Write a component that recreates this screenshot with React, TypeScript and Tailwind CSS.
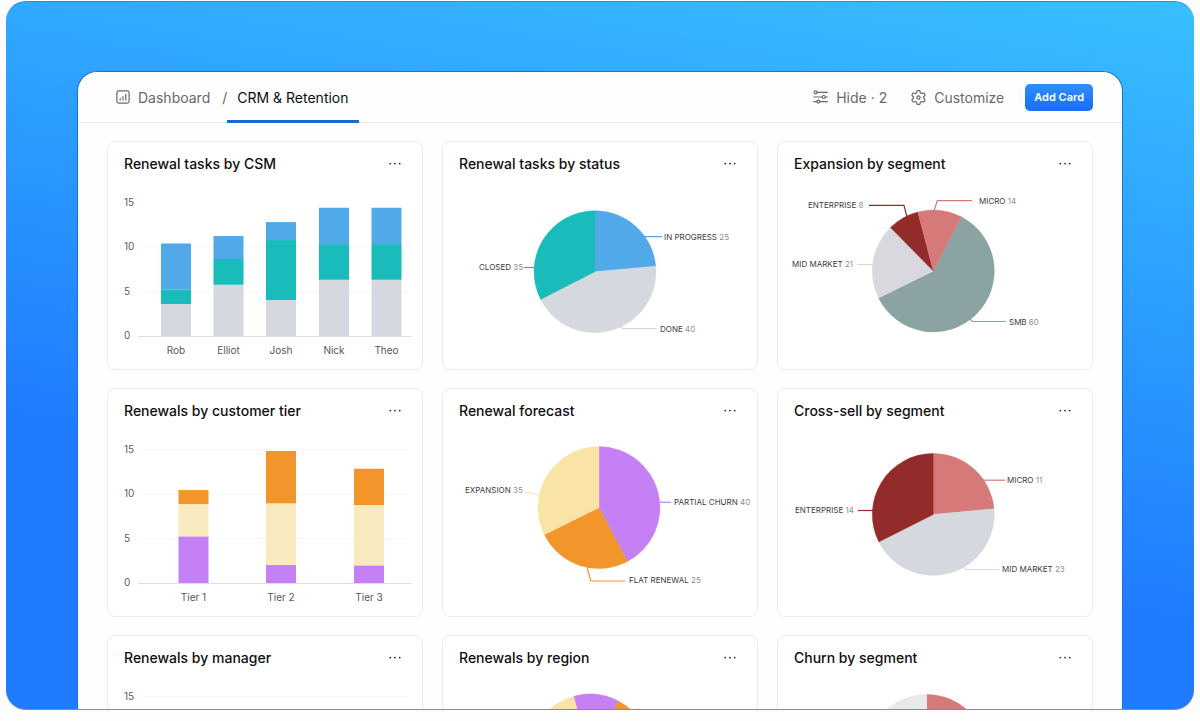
import type { ReactNode } from "react";

const BLUE = "#52a9ea";
const TEAL = "#1abcbb";
const GRAY = "#d6d8df";
const ORANGE = "#f2962b";
const CREAM = "#f9e4a6";
const PALE_CREAM = "#f9eabf";
const PURPLE = "#c680f5";
const DARK_RED = "#932b2a";
const ROSE = "#d67a79";
const SAGE = "#8ba3a3";
const MIST = "#e9e9e9";

type Point = [number, number];
type Slice = { from: number; to: number; color: string };
type Callout = { name: string; value: number; x: number; y: number; color: string; line: Point[] };
type PieData = { cx: number; cy: number; slices: Slice[]; callouts: Callout[] };
type Bar = { label: string; x: number; values: number[] };
type BarData = { colors: string[]; bars: Bar[]; grid: number[]; ticks: number[] };

const RADIUS = 61;
const UNIT = 8.9;
const BASELINE = 195;

/* Charts use the card's own coordinates; the visible part starts below the title row. */
function ChartFrame({ label, children }: { label: string; children: ReactNode }) {
  return (
    <svg viewBox="1 44 314 184" role="img" aria-label={label} className="block w-full">
      {children}
    </svg>
  );
}

function slicePath(cx: number, cy: number, { from, to }: Slice) {
  const at = (deg: number) => {
    const a = (deg * Math.PI) / 180;
    return `${(cx + RADIUS * Math.sin(a)).toFixed(2)} ${(cy - RADIUS * Math.cos(a)).toFixed(2)}`;
  };
  return `M${cx} ${cy}L${at(from)}A${RADIUS} ${RADIUS} 0 ${to - from > 180 ? 1 : 0} 1 ${at(to)}Z`;
}

function PieChart({ title, data }: { title: string; data: PieData }) {
  return (
    <ChartFrame label={title}>
      {data.slices.map((s) => (
        <path key={s.from} d={slicePath(data.cx, data.cy, s)} fill={s.color} stroke={s.color} strokeWidth="0.4" />
      ))}
      {data.callouts.map((c) => (
        <g key={c.name}>
          <polyline
            points={c.line.map((p) => p.join(",")).join(" ")}
            fill="none"
            stroke={c.color}
            strokeWidth="1.2"
            strokeLinejoin="round"
          />
          <text x={c.x} y={c.y} className="fill-[#3c3c3e] text-[8px]">
            {c.name} <tspan className="fill-[#8e8e92]">{c.value}</tspan>
          </text>
        </g>
      ))}
    </ChartFrame>
  );
}

function BarChart({ title, data }: { title: string; data: BarData }) {
  return (
    <ChartFrame label={title}>
      {data.grid.map((v) => (
        <line key={v} x1="37" x2="302" y1={BASELINE - v * UNIT} y2={BASELINE - v * UNIT} stroke="#f6f6f7" />
      ))}
      {data.ticks.map((v) => (
        <text key={v} x="17" y={BASELINE + 3 - v * UNIT} className="fill-[#5c5c60] text-[10px]">
          {v}
        </text>
      ))}
      <line x1="31" x2="304" y1="195.5" y2="195.5" stroke="#dededf" />
      {data.bars.map((b) => {
        let top = BASELINE;
        return (
          <g key={b.label}>
            {b.values.map((v, i) => {
              top -= v * UNIT;
              return <rect key={i} x={b.x} y={top} width="30" height={v * UNIT} fill={data.colors[i]} />;
            })}
            <text x={b.x + 15} y="213" textAnchor="middle" className="fill-[#58585b] text-[10px]">
              {b.label}
            </text>
          </g>
        );
      })}
    </ChartFrame>
  );
}

function Card({ title, children }: { title: string; children: ReactNode }) {
  return (
    <section className="rounded-lg border border-[#ececee] bg-white">
      <header className="flex h-[43px] items-center justify-between pl-4 pr-[19px]">
        <h2 className="text-[14px] font-medium leading-5 text-[#0f0f10]">{title}</h2>
        <button type="button" aria-label={`${title} options`} className="flex h-5 w-4 items-center justify-center">
          <svg viewBox="0 0 14 4" className="h-1 w-3.5 fill-[#2b2b2d]">
            <circle cx="2.3" cy="1.6" r="0.9" />
            <circle cx="7" cy="1.6" r="0.9" />
            <circle cx="11.7" cy="1.6" r="0.9" />
          </svg>
        </button>
      </header>
      {children}
    </section>
  );
}

const csm: BarData = {
  colors: [GRAY, TEAL, BLUE],
  grid: [10, 5],
  ticks: [15, 10, 5, 0],
  bars: [
    { label: "Rob", x: 54, values: [3.6, 1.6, 5.2] },
    { label: "Elliot", x: 106.5, values: [5.76, 2.89, 2.58] },
    { label: "Josh", x: 159, values: [4.04, 6.74, 2.02] },
    { label: "Nick", x: 212, values: [6.32, 4.01, 4.08] },
    { label: "Theo", x: 264.5, values: [6.32, 4.01, 4.08] },
  ],
};

const tiers: BarData = {
  colors: [PURPLE, PALE_CREAM, ORANGE],
  grid: [15, 10, 5],
  ticks: [15, 10, 5, 0],
  bars: [
    { label: "Tier 1", x: 71.5, values: [5.24, 3.63, 1.57] },
    { label: "Tier 2", x: 159, values: [2.02, 6.93, 5.88] },
    { label: "Tier 3", x: 247, values: [1.98, 6.78, 4.08] },
  ],
};

const managers: BarData = { colors: [], grid: [15, 10, 5], ticks: [15], bars: [] };

const status: PieData = {
  cx: 153,
  cy: 130.7,
  slices: [
    { from: 0, to: 84.8, color: BLUE },
    { from: 84.8, to: 243, color: GRAY },
    { from: 243, to: 360, color: TEAL },
  ],
  callouts: [
    { name: "IN PROGRESS", value: 25, x: 222, y: 99, color: BLUE, line: [[202, 95.7], [220, 95.7]] },
    { name: "CLOSED", value: 35, x: 37, y: 129, color: TEAL, line: [[82, 126.5], [93, 126.5]] },
    { name: "DONE", value: 40, x: 218, y: 191, color: GRAY, line: [[178, 186], [181, 187.7], [215, 187.7]] },
  ],
};

const expansion: PieData = {
  cx: 156.3,
  cy: 130,
  slices: [
    { from: 27.3, to: 243.7, color: SAGE },
    { from: 243.7, to: 315.4, color: "#d9d8de" },
    { from: 315.4, to: 345.3, color: DARK_RED },
    { from: 345.3, to: 387.3, color: ROSE },
  ],
  callouts: [
    { name: "ENTERPRISE", value: 8, x: 31, y: 67, color: DARK_RED, line: [[92, 64.3], [127, 64.3], [130, 76]] },
    { name: "MICRO", value: 14, x: 202, y: 63, color: ROSE, line: [[157, 70], [160.3, 59.7], [195, 59.7]] },
    { name: "MID MARKET", value: 21, x: 15, y: 126, color: GRAY, line: [[80, 123.5], [96, 123.5]] },
    { name: "SMB", value: 60, x: 232, y: 184, color: SAGE, line: [[193, 178], [195.5, 180.5], [229, 180.5]] },
  ],
};

const forecast: PieData = {
  cx: 157,
  cy: 119.6,
  slices: [
    { from: 0, to: 152.2, color: PURPLE },
    { from: 152.2, to: 243.6, color: ORANGE },
    { from: 243.6, to: 360, color: CREAM },
  ],
  callouts: [
    { name: "EXPANSION", value: 35, x: 23, y: 105, color: CREAM, line: [[84, 104.6], [90, 105], [98, 107.5]] },
    { name: "PARTIAL CHURN", value: 40, x: 232, y: 117, color: PURPLE, line: [[218, 114.3], [229, 114.3]] },
    { name: "FLAT RENEWAL", value: 25, x: 187, y: 195, color: ORANGE, line: [[145, 179], [148.7, 193], [183, 193]] },
  ],
};

const crossSell: PieData = {
  cx: 156.3,
  cy: 126.4,
  slices: [
    { from: 0, to: 84.8, color: ROSE },
    { from: 84.8, to: 243.2, color: GRAY },
    { from: 243.2, to: 360, color: DARK_RED },
  ],
  callouts: [
    { name: "MICRO", value: 11, x: 230, y: 95, color: ROSE, line: [[206, 92.2], [228, 92.2]] },
    { name: "MID MARKET", value: 23, x: 225, y: 184, color: GRAY, line: [[187, 179], [188.5, 181.5], [223, 181.5]] },
    { name: "ENTERPRISE", value: 14, x: 18, y: 125, color: DARK_RED, line: [[81, 122.5], [96, 122.5]] },
  ],
};

const region: PieData = {
  cx: 148,
  cy: 120,
  slices: [
    { from: 27.7, to: 200, color: ORANGE },
    { from: 200, to: 344.8, color: CREAM },
    { from: 344.8, to: 387.7, color: PURPLE },
  ],
  callouts: [],
};

const churn: PieData = {
  cx: 149.7,
  cy: 120.4,
  slices: [
    { from: 0, to: 180, color: ROSE },
    { from: 180, to: 360, color: MIST },
  ],
  callouts: [],
};

function DashboardIcon() {
  return (
    <svg viewBox="0 0 14 14" className="size-3.5 shrink-0" fill="none" stroke="currentColor" strokeLinecap="round">
      <rect x="0.9" y="0.9" width="12.2" height="12.2" rx="1.8" strokeWidth="1.2" />
      <path d="M4.2 8.7v1.4M7 6.7v3.4M9.8 4.2v5.9" strokeWidth="1.2" />
    </svg>
  );
}

function SlidersIcon() {
  return (
    <svg viewBox="0 0 15 14" className="h-3.5 w-[15px] shrink-0" fill="none" stroke="currentColor" strokeWidth="1.2" strokeLinecap="round">
      <circle cx="2.6" cy="2.4" r="1.5" />
      <path d="M4.2 2.4h10.2" />
      <path d="M.7 7h8.4M12.4 7h2" />
      <circle cx="10.8" cy="7" r="1.5" />
      <path d="M.7 11.6h3M7 11.6h7.4" />
      <circle cx="5.3" cy="11.6" r="1.5" />
    </svg>
  );
}

function GearIcon() {
  return (
    <svg viewBox="1.5 1.5 21 21" className="size-[15px] shrink-0" fill="none" stroke="currentColor" strokeWidth="1.7" strokeLinejoin="round">
      <path d="M9.671 4.136a2.34 2.34 0 0 1 4.659 0 2.34 2.34 0 0 0 3.319 1.915 2.34 2.34 0 0 1 2.33 4.033 2.34 2.34 0 0 0 0 3.831 2.34 2.34 0 0 1-2.33 4.033 2.34 2.34 0 0 0-3.319 1.915 2.34 2.34 0 0 1-4.659 0 2.34 2.34 0 0 0-3.32-1.915 2.34 2.34 0 0 1-2.33-4.033 2.34 2.34 0 0 0 0-3.831A2.34 2.34 0 0 1 6.35 6.051a2.34 2.34 0 0 0 3.319-1.915" />
      <circle cx="12" cy="12" r="2.2" />
    </svg>
  );
}

export default function App() {
  return (
    <div className="flex h-screen flex-col bg-[#fdfdfe] px-1.5 pb-[11px] pt-px font-['Inter',sans-serif]">
      <div className="flex min-h-0 flex-1 flex-col overflow-hidden rounded-[20px] border-b border-t border-b-[#7f86c6] border-t-[#2b8bd6] bg-[linear-gradient(190deg,#38bfff_0%,#1f7cff_68%)] px-[71px] pt-[69px]">
        <main className="min-h-0 flex-1 rounded-t-[20px] border border-b-0 border-[#1f72cc] bg-[#fefefe]">
          <header className="flex h-[51px] items-stretch justify-between border-b border-[#e6e6ea] pl-[38px] pr-[29px] text-[14px] text-[#6b686d]">
            <nav aria-label="Breadcrumb" className="flex items-stretch">
              <a href="#dashboard" className="flex items-center gap-2">
                <DashboardIcon />
                Dashboard
              </a>
              <span className="flex items-center pl-3" aria-hidden="true">
                /
              </span>
              <a
                href="#crm"
                aria-current="page"
                className="-mb-px flex items-center border-b-[3px] border-[#1b66d2] px-2.5 pt-0.5 text-[#0f0f10]"
              >
                CRM &amp; Retention
              </a>
            </nav>
            <div className="flex items-center">
              <button type="button" className="flex items-center gap-2">
                <SlidersIcon />
                Hide · 2
              </button>
              <button type="button" className="ml-6 flex items-center gap-2">
                <GearIcon />
                Customize
              </button>
              <span className="ml-4 h-3 w-px bg-[#f3f3f5]" />
              <button
                type="button"
                className="ml-1 h-[27px] rounded-[5px] bg-linear-to-b from-[#2f8fff] to-[#1a6cf5] px-[9px] text-[11px] font-semibold text-white"
              >
                Add Card
              </button>
            </div>
          </header>
          <div className="grid grid-cols-3 gap-x-[19px] gap-y-[18px] px-[29px] pt-[18px]">
            <Card title="Renewal tasks by CSM">
              <BarChart title="Renewal tasks by CSM" data={csm} />
            </Card>
            <Card title="Renewal tasks by status">
              <PieChart title="Renewal tasks by status" data={status} />
            </Card>
            <Card title="Expansion by segment">
              <PieChart title="Expansion by segment" data={expansion} />
            </Card>
            <Card title="Renewals by customer tier">
              <BarChart title="Renewals by customer tier" data={tiers} />
            </Card>
            <Card title="Renewal forecast">
              <PieChart title="Renewal forecast" data={forecast} />
            </Card>
            <Card title="Cross-sell by segment">
              <PieChart title="Cross-sell by segment" data={crossSell} />
            </Card>
            <Card title="Renewals by manager">
              <BarChart title="Renewals by manager" data={managers} />
            </Card>
            <Card title="Renewals by region">
              <PieChart title="Renewals by region" data={region} />
            </Card>
            <Card title="Churn by segment">
              <PieChart title="Churn by segment" data={churn} />
            </Card>
          </div>
        </main>
      </div>
    </div>
  );
}
